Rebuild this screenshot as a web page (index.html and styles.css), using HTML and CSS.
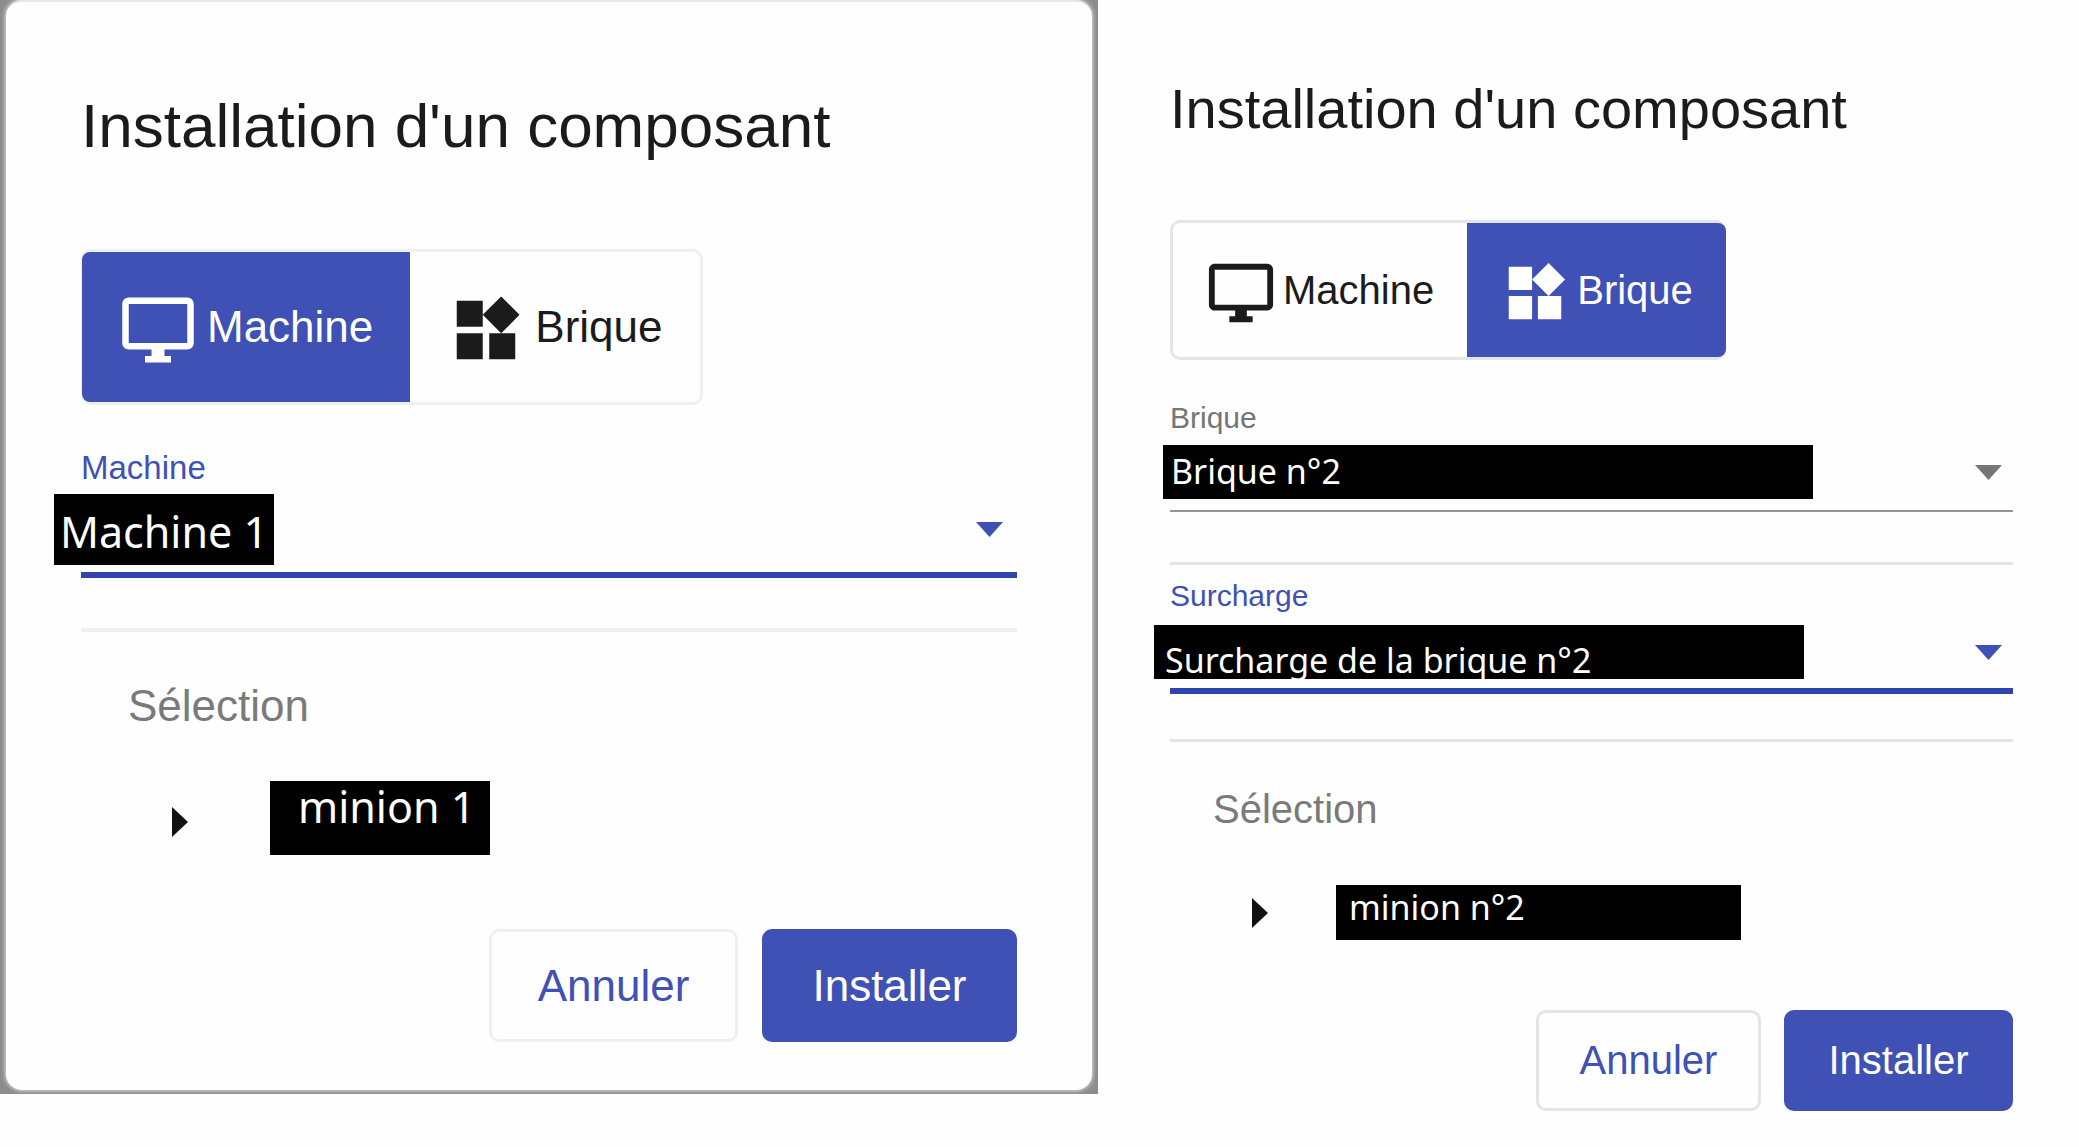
FILE: index.html
```html
<!DOCTYPE html>
<html lang="fr">
<head>
<meta charset="utf-8">
<title>Installation d'un composant</title>
<link rel="stylesheet" href="styles.css">
</head>
<body>
<svg class="sprite" aria-hidden="true">
  <symbol id="icon-machine" viewBox="0 0 24 24"><path d="M21 2H3c-1.1 0-2 .9-2 2v12c0 1.1.9 2 2 2h7v2H8v2h8v-2h-2v-2h7c1.1 0 2-.9 2-2V4c0-1.1-.9-2-2-2zm0 14H3V4h18v12z"/></symbol>
  <symbol id="icon-brique" viewBox="0 0 24 24"><path d="M13 13v8h8v-8h-8zM3 21h8v-8H3v8zM3 3v8h8V3H3zm13.66-1.31L11 7.34 16.66 13l5.66-5.66-5.66-5.65z"/></symbol>
  <symbol id="icon-down" viewBox="0 0 10 5" preserveAspectRatio="none"><path d="M0 0h10L5 5z"/></symbol>
  <symbol id="icon-right" viewBox="0 0 5 10" preserveAspectRatio="none"><path d="M0 0l5 5-5 5z"/></symbol>
</svg>
<main class="page">
  <div class="frame">
    <section class="dialog dialog-large">
      <h1 class="title">Installation d'un composant</h1>
      <div class="toggle">
        <button class="toggle-item selected" type="button" aria-pressed="true"><svg class="icon"><use href="#icon-machine"/></svg>Machine</button>
        <button class="toggle-item" type="button" aria-pressed="false"><svg class="icon"><use href="#icon-brique"/></svg>Brique</button>
      </div>
      <div class="field active">
        <label class="label" for="machine">Machine</label>
        <div class="control">
          <select class="select select-machine" id="machine"><option>Machine 1</option></select>
          <svg class="arrow"><use href="#icon-down"/></svg>
        </div>
      </div>
      <hr class="divider">
      <h2 class="subtitle">Sélection</h2>
      <div class="node">
        <button class="expand" type="button" aria-label="Déplier"><svg class="caret"><use href="#icon-right"/></svg></button>
        <span class="node-name">minion 1</span>
      </div>
      <div class="actions">
        <button class="btn" type="button">Annuler</button>
        <button class="btn btn-primary" type="button">Installer</button>
      </div>
    </section>
  </div>
  <section class="dialog dialog-small">
    <h1 class="title">Installation d'un composant</h1>
    <div class="toggle">
      <button class="toggle-item" type="button" aria-pressed="false"><svg class="icon"><use href="#icon-machine"/></svg>Machine</button>
      <button class="toggle-item selected" type="button" aria-pressed="true"><svg class="icon"><use href="#icon-brique"/></svg>Brique</button>
    </div>
    <div class="field">
      <label class="label" for="brique">Brique</label>
      <div class="control">
        <select class="select select-brique" id="brique"><option>Brique n°2</option></select>
        <svg class="arrow"><use href="#icon-down"/></svg>
      </div>
    </div>
    <hr class="divider">
    <div class="field active">
      <label class="label" for="surcharge">Surcharge</label>
      <div class="control">
        <select class="select select-surcharge" id="surcharge"><option>Surcharge de la brique n°2</option></select>
        <svg class="arrow"><use href="#icon-down"/></svg>
      </div>
    </div>
    <hr class="divider">
    <h2 class="subtitle">Sélection</h2>
    <div class="node">
      <button class="expand" type="button" aria-label="Déplier"><svg class="caret"><use href="#icon-right"/></svg></button>
      <span class="node-name">minion n°2</span>
    </div>
    <div class="actions">
      <button class="btn" type="button">Annuler</button>
      <button class="btn btn-primary" type="button">Installer</button>
    </div>
  </section>
</main>
</body>
</html>
```
FILE: styles.css
```css
* { box-sizing: border-box; }

body {
  margin: 0;
  background: #fefefe;
  color: #1b1b1b;
  font-family: "Liberation Sans", Arial, sans-serif;
}

button, select { font: inherit; margin: 0; }

.sprite { position: absolute; width: 0; height: 0; }

.page {
  display: grid;
  grid-template-columns: 1098fr 981fr;
  align-items: start;
}

.frame {
  overflow: hidden;
  padding: 0 6px 4px 6px;
  background: #8c8c8c;
}

.frame .dialog {
  border-top: 2px solid #e6e6e6;
  border-radius: 16px;
  box-shadow: 0 0 5px #fefefe;
}

.dialog {
  display: flex;
  flex-direction: column;
  background: #fefefe;
}

.dialog-large {
  --text: 44px;
  --icon: 78px;
  --pad: 37px;
  --gap: 10px;
  --line: #f0f0f0;
  padding: 88px 75px 48px 75px;
}

.dialog-small {
  --text: 40px;
  --icon: 70px;
  --pad: 33px;
  --gap: 7px;
  --line: #e5e5e5;
  padding: 76px 66px 36px 72px;
}

.title { margin: 0; font-weight: 400; }
.dialog-large .title { font-size: 62px; line-height: 72px; }
.dialog-small .title { font-size: 56px; line-height: 66px; }

.toggle {
  display: flex;
  align-self: flex-start;
  border: 3px solid var(--line);
  border-radius: 10px;
}
.dialog-large .toggle { height: 156px; margin-top: 87px; }
.dialog-small .toggle { height: 140px; margin-top: 78px; }

.toggle-item {
  display: flex;
  align-items: center;
  gap: var(--gap);
  padding: 0 var(--pad);
  border: 0;
  background: none;
  color: #1b1b1b;
  font-size: var(--text);
}

.toggle-item.selected { background: #3f51b5; color: #fff; }
.toggle-item.selected:first-child { margin: 0 0 0 -2px; border-radius: 8px 0 0 8px; }
.toggle-item.selected:last-child { margin: 0 -3px 0 0; border-radius: 0 8px 8px 0; }

.icon {
  width: var(--icon);
  height: var(--icon);
  margin-top: 6px;
  fill: currentColor;
}

.field {
  display: flex;
  flex-direction: column;
  border-bottom: 2px solid #949494;
  color: #757575;
}
.field.active { border-bottom: 6px solid #3044b0; color: #3f51b5; }

.dialog-large .field { margin-top: 43px; gap: 6px; padding-bottom: 7px; }
.dialog-small .field { margin-top: 40px; gap: 9px; padding-bottom: 11px; }
.dialog-small .divider + .field { margin-top: 13px; gap: 11px; padding-bottom: 9px; }

.label { align-self: flex-start; }
.dialog-large .label { font-size: 33px; line-height: 40px; }
.dialog-small .label { font-size: 30px; line-height: 36px; }

.control {
  display: flex;
  align-items: center;
  justify-content: space-between;
  padding-right: 11px;
}
.dialog-large .control { padding-right: 14px; }

.select {
  appearance: none;
  border: 0;
  border-radius: 0;
  background: #000;
  color: #fff;
  font-family: "Noto Sans", "Open Sans", sans-serif;
}

.select-machine {
  width: 220px;
  height: 71px;
  margin-left: -27px;
  padding: 4px 0 0 6px;
  font-size: 43px;
}
.select-brique, .select-surcharge { width: 650px; height: 54px; font-size: 34px; }
.select-brique { margin-left: -7px; padding: 0 0 2px 8px; }
.select-surcharge { margin-left: -16px; padding: 12px 0 0 11px; }

.arrow { width: 27px; height: 15px; fill: currentColor; }

.divider {
  width: 100%;
  height: 3px;
  margin: 50px 0 0;
  border: 0;
  background: var(--line);
}
.dialog-large .divider { height: 4px; }
.dialog-small .active + .divider { margin-top: 45px; }

.subtitle {
  margin: 0;
  color: #7a7a7a;
  font-size: var(--text);
  font-weight: 400;
}
.dialog-large .subtitle { margin-top: 48px; padding-left: 47px; line-height: 52px; }
.dialog-small .subtitle { margin-top: 43px; padding-left: 43px; line-height: 48px; }

.node { display: flex; align-items: center; }
.dialog-large .node { margin-top: 49px; padding-left: 91px; gap: 82px; }
.dialog-small .node { margin-top: 52px; padding-left: 82px; gap: 68px; }

.expand { display: flex; padding: 0; border: 0; background: none; color: #111; }
.caret { width: 16px; height: 30px; fill: currentColor; }
.dialog-large .expand { padding-top: 7px; }

.node-name {
  background: #000;
  color: #fff;
  font-family: "Noto Sans", "Open Sans", sans-serif;
}
.dialog-large .node-name { width: 220px; height: 74px; padding-left: 28px; font-size: 43px; line-height: 52px; }
.dialog-small .node-name { width: 405px; height: 55px; padding-left: 13px; font-size: 34px; line-height: 44px; }

.actions { display: flex; justify-content: flex-end; gap: 24px; }
.dialog-large .actions { margin-top: 74px; }
.dialog-small .actions { margin-top: 70px; gap: 23px; }

.btn {
  border: 3px solid var(--line);
  border-radius: 10px;
  background: none;
  color: #3f51b5;
  font-size: var(--text);
}
.btn-primary { border-color: #3f51b5; background: #3f51b5; color: #fff; }
.dialog-large .btn { width: 249px; height: 113px; }
.dialog-small .btn { width: 225px; height: 101px; }
.dialog-large .btn-primary { width: 255px; }
.dialog-small .btn-primary { width: 229px; }
```
